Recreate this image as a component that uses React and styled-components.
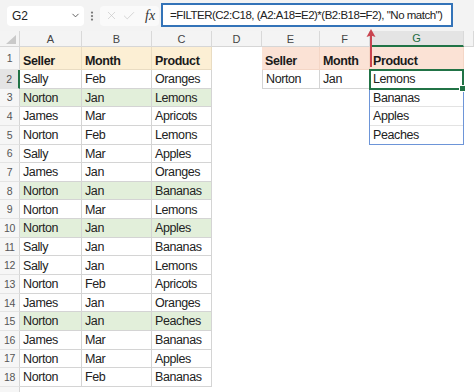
import React from 'react'
import styled, { createGlobalStyle } from 'styled-components'
import { ChevronDown, X, Check, EllipsisVertical } from 'lucide-react'

const GlobalStyle = createGlobalStyle`
  body {
    margin: 0;
    background: #ffffff;
    font-family: "Liberation Sans", Arial, sans-serif;
  }
`

const COLS = ['A', 'B', 'C', 'D', 'E', 'F', 'G', '']

const table = [
  ['Sally', 'Feb', 'Oranges'],
  ['Norton', 'Jan', 'Lemons'],
  ['James', 'Mar', 'Apricots'],
  ['Norton', 'Feb', 'Lemons'],
  ['Sally', 'Mar', 'Apples'],
  ['James', 'Jan', 'Oranges'],
  ['Norton', 'Jan', 'Bananas'],
  ['Norton', 'Mar', 'Lemons'],
  ['Norton', 'Jan', 'Apples'],
  ['Sally', 'Jan', 'Bananas'],
  ['Sally', 'Jan', 'Lemons'],
  ['Norton', 'Feb', 'Apricots'],
  ['James', 'Jan', 'Oranges'],
  ['Norton', 'Jan', 'Peaches'],
  ['James', 'Mar', 'Bananas'],
  ['Norton', 'Mar', 'Apples'],
  ['Norton', 'Feb', 'Bananas'],
]

const results = ['Lemons', 'Bananas', 'Apples', 'Peaches']

const FILL = {
  gold: '#fcefd4',
  peach: '#fbe2d5',
  green: '#e2efda',
}

const App = () => {
  const cells = []

  // row 1: headers of both tables
  ;['Seller', 'Month', 'Product'].forEach((text, i) => {
    cells.push(
      <Cell key={`h-${i}`} $r={2} $c={i + 2} $fill={FILL.gold} $line="#e9dcc2" $bold>
        {text}
      </Cell>
    )
    cells.push(
      <Cell key={`hc-${i}`} $r={2} $c={i + 6} $fill={FILL.peach} $line="#f4d6c6" $bold>
        {text}
      </Cell>
    )
  })

  // source table
  table.forEach((row, ri) => {
    const sheetRow = ri + 2
    const hit = row[0] === 'Norton' && row[1] === 'Jan'
    row.forEach((text, ci) => (
      cells.push(
        <Cell key={`t-${ri}-${ci}`} $r={sheetRow + 1} $c={ci + 2} $fill={hit ? FILL.green : null}>
          {text}
        </Cell>
      )
    ))
  })

  // criteria
  cells.push(<Cell key="e2" $r={3} $c={6} $left>Norton</Cell>)
  cells.push(<Cell key="f2" $r={3} $c={7}>Jan</Cell>)

  // spilled results
  results.forEach((text, i) => {
    cells.push(<Cell key={`g-${i}`} $r={i + 3} $c={8} $line="#e3e3e3">{text}</Cell>)
  })

  return (
    <Page>
      <GlobalStyle />
      <Toolbar>
        <NameBox>
          <span>G2</span>
          <ChevronDown size={11} strokeWidth={2} color="#555" />
        </NameBox>
        <Dots>
          <EllipsisVertical size={12} strokeWidth={2.5} color="#777" />
        </Dots>
        <FxGroup>
          <X size={13} strokeWidth={1.2} color="#c4c4c4" />
          <Check size={14} strokeWidth={1.2} color="#c4c4c4" />
          <Fx>fx</Fx>
        </FxGroup>
        <Formula>=FILTER(C2:C18, (A2:A18=E2)*(B2:B18=F2), "No match")</Formula>
      </Toolbar>

      <Sheet>
        <Corner $r={1} $c={1}>
          <svg width="10" height="9" viewBox="0 0 10 9">
            <path d="M10 0 L10 9 L0 9 Z" fill="#c9c9c9" />
          </svg>
        </Corner>
        {COLS.map((letter, i) => (
          <ColHead key={`c-${i}`} $r={1} $c={i + 2} $active={letter === 'G'}>
            {letter}
          </ColHead>
        ))}
        {Array.from({ length: 19 }, (_, i) => (
          <RowHead key={`r-${i}`} $r={i + 2} $c={1} $active={i + 1 === 2}>
            {/* row 19 only peeks in at the bottom edge */}
            {i < 18 ? i + 1 : ''}
          </RowHead>
        ))}
        {cells}
        <Spill $r="3 / 7" $c={8} />
        <Selection $r="3 / 4" $c={8}>
          <Handle />
        </Selection>
      </Sheet>

      <Arrow width="12" height="40" viewBox="0 0 12 40">
        <line x1="6" y1="5" x2="6" y2="38" stroke="#c9444f" strokeWidth="2" />
        <path d="M6 0 L10.5 8 L6 6.5 L1.5 8 Z" fill="#c9444f" />
      </Arrow>
    </Page>
  )
}

const Page = styled.div`
  position: relative;
  width: 474px;
  height: 392px;
  overflow: hidden;
  background: #ffffff;
`

const Toolbar = styled.div`
  display: flex;
  align-items: center;
  height: 31px;
  padding-left: 7px;
  background: #f3f3f3;
  box-sizing: border-box;
`

const NameBox = styled.div`
  display: flex;
  align-items: center;
  justify-content: space-between;
  width: 77px;
  height: 20px;
  padding: 0 3px 0 5px;
  box-sizing: border-box;
  background: #ffffff;
  border-radius: 4px;
  font-size: 12px;
  color: #222;
`

const Dots = styled.div`
  display: flex;
  align-items: center;
  width: 16px;
  justify-content: center;
`

const FxGroup = styled.div`
  display: flex;
  align-items: center;
  gap: 4px;
  width: 59px;
  height: 20px;
  padding-left: 5px;
  box-sizing: border-box;
  background: #fafafa;
  border-radius: 4px;
`

const Fx = styled.span`
  margin-left: 5px;
  font-family: "Liberation Serif", "Times New Roman", serif;
  font-style: italic;
  font-size: 14px;
  color: #333;
`

const Formula = styled.div`
  display: flex;
  align-items: center;
  margin-left: 2px;
  width: 292px;
  height: 24px;
  margin-top: -2px;
  padding-left: 7px;
  box-sizing: border-box;
  background: #ffffff;
  border: 2px solid #3373b8;
  font-size: 11.5px;
  letter-spacing: -0.5px;
  color: #222;
  white-space: nowrap;
`

const Sheet = styled.div`
  display: grid;
  grid-template-columns: 20px 62px 70px 60px 50px 58px 50px 94px 1fr;
  grid-template-rows: 16px 23px repeat(18, 18.65px);
`

const Placed = styled.div`
  grid-row: ${(p) => p.$r};
  grid-column: ${(p) => p.$c};
  box-sizing: border-box;
  min-width: 0;
`

const Corner = styled(Placed)`
  display: flex;
  align-items: flex-end;
  justify-content: flex-end;
  padding: 0 3px 2px 0;
  background: #f4f4f4;
  border-right: 1px solid #d6d6d6;
  border-bottom: 1px solid #d6d6d6;
`

const ColHead = styled(Placed)`
  display: flex;
  align-items: center;
  justify-content: center;
  background: ${(p) => (p.$active ? '#e4e4e4' : '#f4f4f4')};
  border-right: 1px solid #d9d9d9;
  border-bottom: ${(p) => (p.$active ? '2px solid #217346' : '1px solid #d6d6d6')};
  font-size: 11px;
  color: ${(p) => (p.$active ? '#1e6b41' : '#444')};
`

const RowHead = styled(Placed)`
  display: flex;
  align-items: center;
  justify-content: center;
  background: ${(p) => (p.$active ? '#e4e4e4' : '#f6f6f6')};
  border-right: ${(p) => (p.$active ? '2px solid #217346' : '1px solid #d6d6d6')};
  border-bottom: 1px solid #e4e4e4;
  font-size: 10.5px;
  letter-spacing: -0.4px;
  color: #555;
`

const Cell = styled(Placed)`
  display: flex;
  align-items: flex-end;
  padding: 0 0 2px 3px;
  overflow: hidden;
  white-space: nowrap;
  background: ${(p) => p.$fill || '#ffffff'};
  border-right: 1px solid ${(p) => p.$line || '#d4d4d4'};
  border-bottom: 1px solid ${(p) => p.$line || '#d4d4d4'};
  border-left: ${(p) => (p.$left ? '1px solid #d4d4d4' : 'none')};
  font-size: ${(p) => (p.$bold ? '12.5px' : '12.5px')};
  font-weight: ${(p) => (p.$bold ? 700 : 400)};
  letter-spacing: ${(p) => (p.$bold ? '-0.4px' : '-0.4px')};
  color: ${(p) => (p.$bold ? '#1a1a1a' : '#222')};
  line-height: 1;
`

const Spill = styled(Placed)`
  position: relative;
  z-index: 2;
  margin: -1px 0 0 -1px;
  border: 1px solid #6d95d8;
  pointer-events: none;
`

const Selection = styled(Placed)`
  position: relative;
  z-index: 3;
  margin: -1px 0 -1px -1px;
  border: 2px solid #217346;
  pointer-events: none;
`

const Handle = styled.div`
  position: absolute;
  right: -4px;
  bottom: -4px;
  width: 5px;
  height: 5px;
  background: #217346;
  border: 1px solid #ffffff;
`

const Arrow = styled.svg`
  position: absolute;
  left: 365px;
  top: 29px;
`

export default App
